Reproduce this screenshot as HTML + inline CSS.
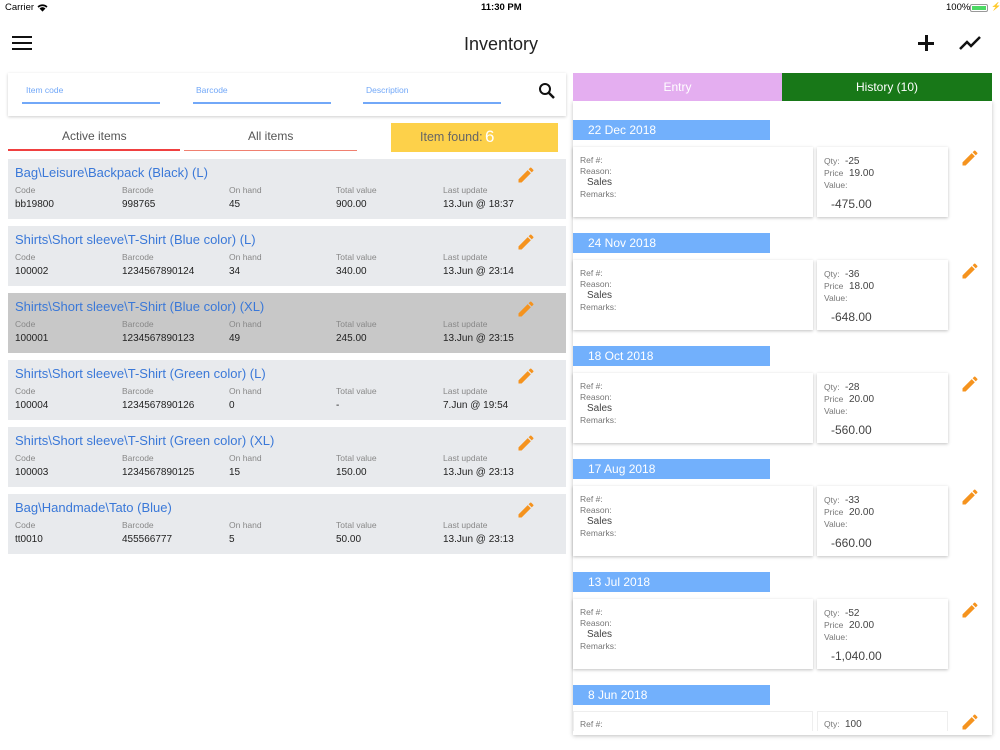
<!DOCTYPE html>
<html><head><meta charset="utf-8"><style>
*{margin:0;padding:0;box-sizing:border-box}
body{width:1000px;height:750px;background:#fff;font-family:"Liberation Sans",sans-serif;position:relative;overflow:hidden;color:#333}
.a{position:absolute;white-space:nowrap}
.row{position:absolute;left:8px;width:558px;height:60px;background:#e8eaed}
.row .t{position:absolute;left:7px;top:6px;font-size:13px;color:#3a78d8}
.row .l{position:absolute;top:26px;font-size:8.5px;color:#888}
.row .v{position:absolute;top:40px;font-size:10px;color:#222}
.pen{position:absolute;width:20px;height:20px}
.dh{position:absolute;left:573px;width:197px;height:20px;background:#72b0fc;color:#fff;font-size:12px;padding:3px 0 0 15px}
.cl{position:absolute;left:573px;width:240px;height:70px;background:#fff;box-shadow:0 1px 3px rgba(0,0,0,.25)}
.cr{position:absolute;left:817px;width:131px;height:70px;background:#fff;box-shadow:0 1px 3px rgba(0,0,0,.25)}
.s{position:absolute;font-size:8.5px;color:#777}
.m{position:absolute;font-size:10px;color:#444}
</style></head><body>
<div class="a" style="left:5px;top:2px;font-size:9.5px;color:#000">Carrier</div>
<svg class="a" style="left:37px;top:3px" width="11" height="9" viewBox="0 0 11 9"><path d="M0.5 3.5A7 7 0 0 1 10.5 3.5L9.3 4.7A5.3 5.3 0 0 0 1.7 4.7Z M2.5 5.5A4 4 0 0 1 8.5 5.5L5.5 8.6Z" fill="#000"/></svg>
<div class="a" style="left:481px;top:2px;font-size:9.5px;font-weight:bold;color:#000">11:30 PM</div>
<div class="a" style="left:946px;top:2px;font-size:9.5px;color:#000">100%</div>
<div class="a" style="left:970px;top:4px;width:18px;height:8px;border:1px solid #999;border-radius:2px;padding:1px"><div style="width:100%;height:100%;background:#4cd964"></div></div>
<div class="a" style="left:991px;top:2px;font-size:8px;color:#000">⚡</div>
<div class="a" style="left:12px;top:36px;width:20px;height:2px;background:#111"></div>
<div class="a" style="left:12px;top:42px;width:20px;height:2px;background:#111"></div>
<div class="a" style="left:12px;top:48px;width:20px;height:2px;background:#111"></div>
<div class="a" style="left:464px;top:34px;font-size:18px;color:#222">Inventory</div>
<div class="a" style="left:918px;top:42px;width:16px;height:2.5px;background:#111"></div>
<div class="a" style="left:925px;top:35px;width:2.5px;height:16px;background:#111"></div>
<svg class="a" style="left:958px;top:34px" width="26" height="18" viewBox="0 0 26 18"><path d="M2 15L9 8L13 12L22 3" stroke="#111" stroke-width="2.5" fill="none"/></svg>
<div class="a" style="left:8px;top:73px;width:558px;height:43px;background:#fff;box-shadow:0 1px 3px rgba(0,0,0,.2)"></div>
<div class="a" style="left:26px;top:85px;font-size:8.5px;color:#72a8f8">Item code</div>
<div class="a" style="left:22px;top:102px;width:138px;height:2px;background:#72a8f8"></div>
<div class="a" style="left:196px;top:85px;font-size:8.5px;color:#72a8f8">Barcode</div>
<div class="a" style="left:193px;top:102px;width:138px;height:2px;background:#72a8f8"></div>
<div class="a" style="left:366px;top:85px;font-size:8.5px;color:#72a8f8">Description</div>
<div class="a" style="left:363px;top:102px;width:138px;height:2px;background:#72a8f8"></div>
<svg class="a" style="left:538px;top:82px" width="18" height="18" viewBox="0 0 18 18"><circle cx="7" cy="7" r="5" stroke="#111" stroke-width="2" fill="none"/><path d="M10.5 10.5L16 16" stroke="#111" stroke-width="2.5"/></svg>
<div class="a" style="left:62px;top:129px;font-size:12px;color:#555">Active items</div>
<div class="a" style="left:8px;top:149px;width:172px;height:2px;background:#f04040"></div>
<div class="a" style="left:248px;top:129px;font-size:12px;color:#555">All items</div>
<div class="a" style="left:184px;top:150px;width:173px;height:1px;background:#f08070"></div>
<div class="a" style="left:391px;top:123px;width:167px;height:29px;background:#fdd14a"></div>
<div class="a" style="left:420px;top:130px;font-size:12.5px;color:#666">Item found:</div>
<div class="a" style="left:485px;top:127px;font-size:17px;color:#fff">6</div>

<div class="row" style="top:159px"><div class="t">Bag\Leisure\Backpack (Black) (L)</div>
<div class="l" style="left:7px">Code</div><div class="l" style="left:114px">Barcode</div><div class="l" style="left:221px">On hand</div><div class="l" style="left:328px">Total value</div><div class="l" style="left:435px">Last update</div>
<div class="v" style="left:7px">bb19800</div><div class="v" style="left:114px">998765</div><div class="v" style="left:221px">45</div><div class="v" style="left:328px">900.00</div><div class="v" style="left:435px">13.Jun @ 18:37</div></div>
<div class="row" style="top:226px"><div class="t">Shirts\Short sleeve\T-Shirt (Blue color) (L)</div>
<div class="l" style="left:7px">Code</div><div class="l" style="left:114px">Barcode</div><div class="l" style="left:221px">On hand</div><div class="l" style="left:328px">Total value</div><div class="l" style="left:435px">Last update</div>
<div class="v" style="left:7px">100002</div><div class="v" style="left:114px">1234567890124</div><div class="v" style="left:221px">34</div><div class="v" style="left:328px">340.00</div><div class="v" style="left:435px">13.Jun @ 23:14</div></div>
<div class="row" style="top:293px;background:#c8c8c8"><div class="t">Shirts\Short sleeve\T-Shirt (Blue color) (XL)</div>
<div class="l" style="left:7px">Code</div><div class="l" style="left:114px">Barcode</div><div class="l" style="left:221px">On hand</div><div class="l" style="left:328px">Total value</div><div class="l" style="left:435px">Last update</div>
<div class="v" style="left:7px">100001</div><div class="v" style="left:114px">1234567890123</div><div class="v" style="left:221px">49</div><div class="v" style="left:328px">245.00</div><div class="v" style="left:435px">13.Jun @ 23:15</div></div>
<div class="row" style="top:360px"><div class="t">Shirts\Short sleeve\T-Shirt (Green color) (L)</div>
<div class="l" style="left:7px">Code</div><div class="l" style="left:114px">Barcode</div><div class="l" style="left:221px">On hand</div><div class="l" style="left:328px">Total value</div><div class="l" style="left:435px">Last update</div>
<div class="v" style="left:7px">100004</div><div class="v" style="left:114px">1234567890126</div><div class="v" style="left:221px">0</div><div class="v" style="left:328px">-</div><div class="v" style="left:435px">7.Jun @ 19:54</div></div>
<div class="row" style="top:427px"><div class="t">Shirts\Short sleeve\T-Shirt (Green color) (XL)</div>
<div class="l" style="left:7px">Code</div><div class="l" style="left:114px">Barcode</div><div class="l" style="left:221px">On hand</div><div class="l" style="left:328px">Total value</div><div class="l" style="left:435px">Last update</div>
<div class="v" style="left:7px">100003</div><div class="v" style="left:114px">1234567890125</div><div class="v" style="left:221px">15</div><div class="v" style="left:328px">150.00</div><div class="v" style="left:435px">13.Jun @ 23:13</div></div>
<div class="row" style="top:494px"><div class="t">Bag\Handmade\Tato (Blue)</div>
<div class="l" style="left:7px">Code</div><div class="l" style="left:114px">Barcode</div><div class="l" style="left:221px">On hand</div><div class="l" style="left:328px">Total value</div><div class="l" style="left:435px">Last update</div>
<div class="v" style="left:7px">tt0010</div><div class="v" style="left:114px">455566777</div><div class="v" style="left:221px">5</div><div class="v" style="left:328px">50.00</div><div class="v" style="left:435px">13.Jun @ 23:13</div></div>

<svg width="0" height="0" style="position:absolute"><defs><symbol id="p" viewBox="0 0 24 24"><path d="M3 17.25V21h3.75L17.81 9.94l-3.75-3.75L3 17.25zM20.71 7.04a1 1 0 000-1.41l-2.34-2.34a1 1 0 00-1.41 0l-1.83 1.83 3.75 3.75 1.83-1.83z" fill="#f5931e"/></symbol></defs></svg>
<svg class="pen" style="left:516px;top:165px"><use href="#p"/></svg>
<svg class="pen" style="left:516px;top:232px"><use href="#p"/></svg>
<svg class="pen" style="left:516px;top:299px"><use href="#p"/></svg>
<svg class="pen" style="left:516px;top:366px"><use href="#p"/></svg>
<svg class="pen" style="left:516px;top:433px"><use href="#p"/></svg>
<svg class="pen" style="left:516px;top:500px"><use href="#p"/></svg>

<div class="a" style="left:573px;top:101px;width:419px;height:634px;background:#fff;box-shadow:0 1px 4px rgba(0,0,0,.25)"></div>
<div class="a" style="left:573px;top:73px;width:209px;height:28px;background:#e4aef0;color:#fff;font-size:12px;text-align:center;line-height:28px">Entry</div>
<div class="a" style="left:782px;top:73px;width:210px;height:28px;background:#187818;color:#fff;font-size:12px;text-align:center;line-height:28px">History (10)</div>

<div class="dh" style="top:120px">22 Dec 2018</div>
<div class="cl" style="top:147px"><div class="s" style="left:7px;top:8px">Ref #:</div><div class="s" style="left:7px;top:19px">Reason:</div><div class="m" style="left:14px;top:30px">Sales</div><div class="s" style="left:7px;top:42px">Remarks:</div></div>
<div class="cr" style="top:147px"><div class="s" style="left:7px;top:9px">Qty:</div><div class="m" style="left:28px;top:9px">-25</div><div class="s" style="left:7px;top:21px">Price</div><div class="m" style="left:32px;top:21px">19.00</div><div class="s" style="left:7px;top:33px">Value:</div><div class="m" style="left:14px;top:50px;font-size:12px">-475.00</div></div>
<svg class="pen" style="left:960px;top:148px"><use href="#p"/></svg>

<div class="dh" style="top:233px">24 Nov 2018</div>
<div class="cl" style="top:260px"><div class="s" style="left:7px;top:8px">Ref #:</div><div class="s" style="left:7px;top:19px">Reason:</div><div class="m" style="left:14px;top:30px">Sales</div><div class="s" style="left:7px;top:42px">Remarks:</div></div>
<div class="cr" style="top:260px"><div class="s" style="left:7px;top:9px">Qty:</div><div class="m" style="left:28px;top:9px">-36</div><div class="s" style="left:7px;top:21px">Price</div><div class="m" style="left:32px;top:21px">18.00</div><div class="s" style="left:7px;top:33px">Value:</div><div class="m" style="left:14px;top:50px;font-size:12px">-648.00</div></div>
<svg class="pen" style="left:960px;top:261px"><use href="#p"/></svg>

<div class="dh" style="top:346px">18 Oct 2018</div>
<div class="cl" style="top:373px"><div class="s" style="left:7px;top:8px">Ref #:</div><div class="s" style="left:7px;top:19px">Reason:</div><div class="m" style="left:14px;top:30px">Sales</div><div class="s" style="left:7px;top:42px">Remarks:</div></div>
<div class="cr" style="top:373px"><div class="s" style="left:7px;top:9px">Qty:</div><div class="m" style="left:28px;top:9px">-28</div><div class="s" style="left:7px;top:21px">Price</div><div class="m" style="left:32px;top:21px">20.00</div><div class="s" style="left:7px;top:33px">Value:</div><div class="m" style="left:14px;top:50px;font-size:12px">-560.00</div></div>
<svg class="pen" style="left:960px;top:374px"><use href="#p"/></svg>

<div class="dh" style="top:459px">17 Aug 2018</div>
<div class="cl" style="top:486px"><div class="s" style="left:7px;top:8px">Ref #:</div><div class="s" style="left:7px;top:19px">Reason:</div><div class="m" style="left:14px;top:30px">Sales</div><div class="s" style="left:7px;top:42px">Remarks:</div></div>
<div class="cr" style="top:486px"><div class="s" style="left:7px;top:9px">Qty:</div><div class="m" style="left:28px;top:9px">-33</div><div class="s" style="left:7px;top:21px">Price</div><div class="m" style="left:32px;top:21px">20.00</div><div class="s" style="left:7px;top:33px">Value:</div><div class="m" style="left:14px;top:50px;font-size:12px">-660.00</div></div>
<svg class="pen" style="left:960px;top:487px"><use href="#p"/></svg>

<div class="dh" style="top:572px">13 Jul 2018</div>
<div class="cl" style="top:599px"><div class="s" style="left:7px;top:8px">Ref #:</div><div class="s" style="left:7px;top:19px">Reason:</div><div class="m" style="left:14px;top:30px">Sales</div><div class="s" style="left:7px;top:42px">Remarks:</div></div>
<div class="cr" style="top:599px"><div class="s" style="left:7px;top:9px">Qty:</div><div class="m" style="left:28px;top:9px">-52</div><div class="s" style="left:7px;top:21px">Price</div><div class="m" style="left:32px;top:21px">20.00</div><div class="s" style="left:7px;top:33px">Value:</div><div class="m" style="left:14px;top:50px;font-size:12px">-1,040.00</div></div>
<svg class="pen" style="left:960px;top:600px"><use href="#p"/></svg>

<div class="dh" style="top:685px">8 Jun 2018</div>
<div class="cl" style="top:711px;height:20px;box-shadow:none;border:1px solid #eee;border-bottom:none"><div class="s" style="left:6px;top:7px">Ref #:</div></div>
<div class="cr" style="top:711px;height:20px;box-shadow:none;border:1px solid #eee;border-bottom:none"><div class="s" style="left:6px;top:7px">Qty:</div><div class="m" style="left:27px;top:7px">100</div></div>
<svg class="pen" style="left:960px;top:712px"><use href="#p"/></svg>
</body></html>
